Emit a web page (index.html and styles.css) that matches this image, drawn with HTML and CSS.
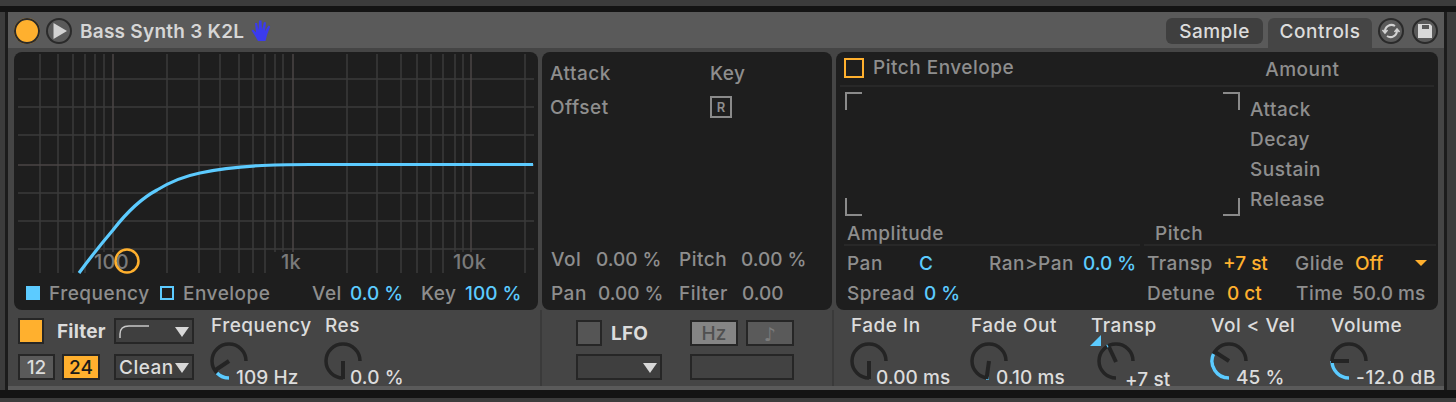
FILE: index.html
```html
<!DOCTYPE html>
<html lang="en">
<head>
<meta charset="UTF-8">
<title>Bass Synth 3 K2L</title>
<link rel="stylesheet" href="styles.css">
</head>
<body>

<div class="top-band"></div>
<div class="black-bar"></div>

<div class="device">

    <!-- Title bar -->
    <header class="titlebar">
        <div class="round-btn power"></div>
        <div class="round-btn play">
            <svg width="26" height="26" viewBox="0 0 26 26"><path d="M7.500 5 L21 13 L7.500 21 Z" fill="#d2d2d2"/></svg>
        </div>
        <div class="title">Bass Synth 3 K2L</div>
        <svg class="hand" width="20" height="22" viewBox="0 0 20 22">
            <path d="M7 21 L3.5 15 L0.5 10.5 L2 9.5 L5 12.5 L4 3 L6 3 L7.5 10 L8 0.5 L10.5 0.5 L11 10 L13 2 L15 2.5 L14 11 L17.5 5.5 L19.2 6.5 L16 15 L14.5 21 Z" fill="#3b3bee"/>
        </svg>
        <div class="tabs">
            <div class="tab">Sample</div>
            <div class="tab active">Controls</div>
        </div>
        <div class="round-btn sync">
            <svg width="26" height="26" viewBox="0 0 26 26" fill="none" stroke="#d2d2d2" stroke-width="2">
                <path d="M7 14 A6.500 6.500 0 0 1 17 8"/>
                <path d="M19 12 A6.500 6.500 0 0 1 9 18"/>
                <path d="M4.500 12 L7 15 L9.500 12" stroke-width="1.6"/>
                <path d="M16.500 14 L19 11 L21.500 14" stroke-width="1.6"/>
            </svg>
        </div>
        <div class="round-btn save">
            <svg width="26" height="26" viewBox="0 0 26 26"><path fill-rule="evenodd" d="M6 6 H18 L20 8 V20 H6 Z M10 7 V11 H17 V7 Z" fill="#d8d8d8"/></svg>
        </div>
    </header>

    <!-- Display panels -->
    <div class="columns panels">

        <section class="panel panel-filter">
            <svg class="graph" width="524" height="224" viewBox="14 52 524 224" fill="none">
                <g class="grid-line">
                    <path d="M18 79 H534 M18 107 H534 M18 135 H534 M18 193 H534 M18 221 H534 M18 249 H534"/>
                    <path d="M40 54 V273 M58 54 V273 M73 54 V273 M85 54 V273 M95 54 V252 M104 54 V252"/>
                    <path d="M167 54 V273 M199 54 V273 M220 54 V273 M239 54 V273 M253 54 V273 M265 54 V273 M275 54 V252 M283 54 V252"/>
                    <path d="M347 54 V273 M377 54 V273 M401 54 V273 M417 54 V273 M431 54 V273 M443 54 V273 M455 54 V252 M463 54 V252 M525 54 V273"/>
                </g>
                <path class="grid-bright" d="M18 165 H534 M113 54 V252 M293 54 V252 M471 54 V252"/>
                <text class="axis" x="94" y="269">100</text>
                <text class="axis" x="281" y="269">1k</text>
                <text class="axis" x="453" y="269">10k</text>
                <path class="curve" d="M79 273 C90 258 102 243 113 230 C127 212 142 198 157 190 C170 182 185 176 200 173 C218 169 240 166.500 262 165.500 C280 164.800 295 164.500 310 164.500 H533"/>
                <circle class="cutoff" cx="127" cy="261" r="11.500"/>
            </svg>
            <div class="row legend">
                <span class="swatch full"></span>
                <span>Frequency</span>
                <span class="swatch"></span>
                <span>Envelope</span>
                <span>Vel</span>
                <span class="blue">0.0 %</span>
                <span>Key</span>
                <span class="blue">100 %</span>
            </div>
        </section>

        <section class="panel panel-offset">
            <div class="row row-offset"><span>Attack</span><span>Key</span></div>
            <div class="row row-offset"><span>Offset</span><span class="r-box">R</span></div>
            <div class="row row-vol tail"><span>Vol</span><span class="num">0.00 %</span><span>Pitch</span><span class="num">0.00 %</span></div>
            <div class="row row-pan"><span>Pan</span><span class="num">0.00 %</span><span>Filter</span><span class="num">0.00</span></div>
        </section>

        <section class="panel panel-env">
            <div class="env-head">
                <span class="check"></span>
                <span class="env-name">Pitch Envelope</span>
                <span class="env-amount">Amount</span>
            </div>
            <div class="env-body">
                <div class="env-box">
                    <i class="corner tl"></i><i class="corner tr"></i>
                    <i class="corner bl"></i><i class="corner br"></i>
                </div>
                <div class="adsr">
                    <div>Attack</div>
                    <div>Decay</div>
                    <div>Sustain</div>
                    <div>Release</div>
                </div>
            </div>
            <div class="sections">
                <div class="section-name">Amplitude</div>
                <div class="section-name second">Pitch</div>
            </div>
            <div class="row row-a">
                <span>Pan</span><span class="blue">C</span><span>Ran&gt;Pan</span><span class="blue">0.0 %</span>
                <span>Transp</span><span class="orange">+7 st</span><span>Glide</span><span class="orange">Off</span><i class="tri small"></i>
            </div>
            <div class="row row-b">
                <span>Spread</span><span class="blue">0 %</span>
                <span>Detune</span><span class="orange">0 ct</span><span>Time</span><span class="num">50.0 ms</span>
            </div>
        </section>
    </div>

    <!-- Bottom controls -->
    <div class="columns controls">

        <div class="ctl ctl-filter">
            <div class="filter-group">
                <div class="filter-row">
                    <span class="toggle on"></span>
                    <span class="strong filter-name">Filter</span>
                    <div class="drop">
                        <svg width="32" height="16" viewBox="0 0 32 16" fill="none"><path d="M1 14 V10 Q1 2 10 2 H30" stroke="#c8c8c8" stroke-width="1.500"/></svg>
                        <i class="tri"></i>
                    </div>
                </div>
                <div class="filter-row">
                    <span class="btn slope">12</span>
                    <span class="btn slope on">24</span>
                    <div class="drop clean">Clean<i class="tri"></i></div>
                </div>
            </div>
            <div class="knob knob-freq">
                <div class="knob-name">Frequency</div>
                <div class="knob-row">
                    <svg class="dial" width="38" height="38" viewBox="0 0 38 38" fill="none">
                        <path class="dial-track" d="M19 36 A17 17 0 1 1 36 19"/>
                        <path class="dial-value" d="M7 31 A17 17 0 0 0 19 36"/>
                        <path class="dial-needle" d="M19 19 L4 29"/>
                    </svg>
                    <span class="knob-value">109 Hz</span>
                </div>
            </div>
            <div class="knob">
                <div class="knob-name">Res</div>
                <div class="knob-row">
                    <svg class="dial" width="38" height="38" viewBox="0 0 38 38" fill="none">
                        <path class="dial-track" d="M19 36 A17 17 0 1 1 36 19"/>
                        <path class="dial-needle" d="M19 19 V37"/>
                    </svg>
                    <span class="knob-value">0.0 %</span>
                </div>
            </div>
        </div>

        <div class="ctl ctl-lfo">
            <div class="lfo-col">
                <div class="lfo-top">
                    <span class="toggle"></span>
                    <span class="strong">LFO</span>
                </div>
                <div class="drop lfo-drop"><i class="tri"></i></div>
            </div>
            <div class="lfo-col">
                <div class="lfo-top tight">
                    <span class="btn rate on-grey">Hz</span>
                    <span class="btn rate note">♪</span>
                </div>
                <div class="drop rate-box"></div>
            </div>
        </div>

        <div class="ctl ctl-knobs">
            <div class="knob">
                <div class="knob-name">Fade In</div>
                <div class="knob-row">
                    <svg class="dial" width="38" height="38" viewBox="0 0 38 38" fill="none">
                        <path class="dial-track" d="M19 36 A17 17 0 1 1 36 19"/>
                        <path class="dial-needle" d="M19 19 V37"/>
                    </svg>
                    <span class="knob-value">0.00 ms</span>
                </div>
            </div>
            <div class="knob">
                <div class="knob-name">Fade Out</div>
                <div class="knob-row">
                    <svg class="dial" width="38" height="38" viewBox="0 0 38 38" fill="none">
                        <path class="dial-track" d="M19 36 A17 17 0 1 1 36 19"/>
                        <path class="dial-value" d="M16 36 L19 36"/>
                        <path class="dial-needle" d="M19 19 L16.500 37"/>
                    </svg>
                    <span class="knob-value">0.10 ms</span>
                </div>
            </div>
            <div class="knob knob-transp">
                <div class="knob-name">Transp</div>
                <i class="center-mark"></i>
                <div class="knob-row">
                    <svg class="dial" width="38" height="38" viewBox="0 0 38 38" fill="none">
                        <path class="dial-track" d="M19 36 A17 17 0 1 1 36 19"/>
                        <path class="dial-value" d="M10 4.500 L11 4"/>
                        <path class="dial-needle" d="M19 20 L12 5"/>
                    </svg>
                    <span class="knob-value">+7 st</span>
                </div>
            </div>
            <div class="knob">
                <div class="knob-name">Vol &lt; Vel</div>
                <div class="knob-row">
                    <svg class="dial" width="38" height="38" viewBox="0 0 38 38" fill="none">
                        <path class="dial-track" d="M19 36 A17 17 0 1 1 36 19"/>
                        <path class="dial-value" d="M3.500 12 A17 17 0 0 0 19 36"/>
                        <path class="dial-needle" d="M19 19 L5 10"/>
                    </svg>
                    <span class="knob-value">45 %</span>
                </div>
            </div>
            <div class="knob">
                <div class="knob-name">Volume</div>
                <div class="knob-row">
                    <svg class="dial" width="38" height="38" viewBox="0 0 38 38" fill="none">
                        <path class="dial-track" d="M19 36 A17 17 0 1 1 36 19"/>
                        <path class="dial-value" d="M2 19 A17 17 0 0 0 19 36"/>
                        <path class="dial-needle" d="M19 19 H1"/>
                    </svg>
                    <span class="knob-value wide">-12.0 dB</span>
                </div>
            </div>
        </div>
    </div>

    <div class="foot"></div>
</div>

<div class="black-bar bottom"></div>

</body>
</html>
```

FILE: styles.css
```css
* {
    box-sizing: border-box;
}
body {
    margin: 0;
    height: 402px;
    overflow: hidden;
    background: #3c3c3c;
    color: #8e8e8e;
    font-family: Inter, "Noto Sans", sans-serif;
    font-size: 19px;
    font-weight: 500;
    letter-spacing: 0.5px;
    line-height: 20px;
}
i {
    display: block;
}
.top-band {
    height: 6px;
}
.black-bar {
    height: 6px;
    background: #141414;
}
.black-bar.bottom {
    height: 8px;
}
.device {
    margin: 0 9px 0 5px;
    border-left: 3px solid #1c1c1c;
    border-right: 3px solid #1c1c1c;
    background: #454545;
}

/* title bar */
.titlebar {
    height: 36px;
    padding: 6px 6px 0 6px;
    display: flex;
    align-items: flex-start;
    background: #5a5a5a;
}
.round-btn {
    width: 26px;
    height: 26px;
    border-radius: 50%;
    flex: none;
    box-shadow: inset 0 0 0 2px #2a2a2a;
}
.power {
    background: #ffb02e;
}
.play {
    margin-left: 6px;
}
.title {
    margin-left: 8px;
    color: #d6d6d6;
    font-weight: 600;
    letter-spacing: 0.25px;
    line-height: 28px;
}
.hand {
    margin: 2px 0 0 7px;
}
.tabs {
    margin-left: auto;
    display: flex;
    gap: 5px;
}
.tab {
    width: 97px;
    height: 26px;
    line-height: 28px;
    text-align: center;
    color: #dcdcdc;
    background: #3f3f3f;
    border-radius: 6px;
}
.tab.active {
    width: 104px;
    height: 30px;
    border-radius: 6px 6px 0 0;
    background: #454545;
}
.sync {
    margin-left: 6px;
}
.save {
    margin-left: 8px;
}

/* shared columns */
.columns {
    display: grid;
    grid-template-columns: 524px 290px 602px;
    column-gap: 4px;
    padding: 0 6px;
}
.panels {
    padding-top: 4px;
}
.panel {
    height: 258px;
    background: #1e1e1e;
    border-radius: 8px;
    display: flex;
    flex-direction: column;
}
.row {
    display: grid;
    height: 34px;
    line-height: 35px;
    white-space: nowrap;
}
.num {
    letter-spacing: 0;
}
.blue {
    color: #5ccbff;
    letter-spacing: 0;
}
.orange {
    color: #ffb02e;
    letter-spacing: 0;
}

/* filter graph */
.graph {
    display: block;
}
.grid-line {
    stroke: #3b3b3b;
    stroke-width: 1.5;
}
.grid-bright {
    stroke: #4b4646;
    stroke-width: 1.5;
}
.axis {
    fill: #7a7a7a;
    stroke: none;
    font-size: 20px;
    letter-spacing: 0.3px;
}
.curve {
    stroke: #5ccbff;
    stroke-width: 3.2;
}
.cutoff {
    stroke: #ffb02e;
    stroke-width: 2.5;
}
.legend {
    padding-left: 12px;
    grid-template-columns: 23px 111px 23px 129px 38px 71px 44px 1fr;
}
.swatch {
    width: 14px;
    height: 14px;
    margin-top: 10px;
    border: 2px solid #5ccbff;
}
.swatch.full {
    background: #5ccbff;
}

/* offset panel */
.panel-offset {
    padding: 4px 0 0 8px;
}
.row-offset {
    grid-template-columns: 160px 1fr;
}
.r-box {
    width: 22px;
    height: 22px;
    margin: 6px 0 0 0;
    border: 2px solid #8a8a8a;
    font-size: 13px;
    font-weight: 600;
    line-height: 18px;
    letter-spacing: 0;
    text-align: center;
}
.tail {
    margin-top: auto;
}
.row-vol {
    padding-left: 1px;
    grid-template-columns: 45px 83px 62px 1fr;
}
.row-pan {
    padding-left: 1px;
    grid-template-columns: 47px 81px 63px 1fr;
}

/* pitch envelope panel */
.panel-env {
    padding: 6px 4px 0 8px;
}
.env-head {
    display: flex;
    height: 29px;
    border-bottom: 2px solid #282828;
    margin-left: -4px;
    padding-left: 4px;
}
.check {
    width: 20px;
    height: 20px;
    border: 2px solid #ffb02e;
}
.env-name {
    margin-left: 9px;
}
.env-amount {
    margin-left: 251px;
    line-height: 24px;
}
.env-body {
    display: flex;
    height: 124px;
    margin: 5px 0 0 1px;
}
.env-box {
    width: 395px;
    display: flex;
    flex-wrap: wrap;
    justify-content: space-between;
    align-content: space-between;
}
.corner {
    width: 17px;
    height: 18px;
    border: 0 solid #8a8a8a;
}
.corner.tl {
    border-width: 2px 0 0 2px;
    margin-right: 361px;
}
.corner.tr {
    border-width: 2px 2px 0 0;
}
.corner.bl {
    border-width: 0 0 2px 2px;
    margin-right: 361px;
}
.corner.br {
    border-width: 0 2px 2px 0;
}
.adsr {
    margin-left: 10px;
    padding-top: 3px;
    line-height: 30px;
}
.sections {
    display: grid;
    grid-template-columns: 296px 292px;
    column-gap: 4px;
    margin-top: 8px;
}
.section-name {
    height: 22px;
    padding-left: 3px;
    border-bottom: 2px solid #282828;
}
.section-name.second {
    padding-left: 11px;
}
.row-a,
.row-b {
    height: 30px;
    line-height: 31px;
    padding-left: 3px;
}
.row-a {
    margin-top: 2px;
    grid-template-columns: 72px 70px 94px 64px 76px 72px 60px 60px 1fr;
}
.row-b {
    grid-template-columns: 77px 223px 80px 69px 56px 1fr;
}

/* triangles */
.tri {
    width: 0;
    height: 0;
    border-left: 7px solid transparent;
    border-right: 7px solid transparent;
    border-top: 10px solid #d8d8d8;
}
.tri.small {
    border-left-width: 6px;
    border-right-width: 6px;
    border-top: 6px solid #ffb02e;
    margin-top: 12px;
}

/* bottom controls */
.controls {
    height: 76px;
}
.ctl {
    display: flex;
}
.ctl-filter {
    padding-left: 4px;
}
.filter-group {
    width: 176px;
    padding-top: 8px;
    display: flex;
    flex-direction: column;
    gap: 10px;
}
.filter-row {
    display: flex;
    align-items: center;
    height: 26px;
}
.toggle {
    width: 26px;
    height: 26px;
    border: 2px solid #262626;
    background: #555;
    flex: none;
}
.toggle.on {
    background: #ffb02e;
}
.strong {
    color: #dcdcdc;
    font-weight: 700;
    letter-spacing: 0.2px;
    padding-top: 2px;
}
.filter-name {
    margin-left: 13px;
}
.drop {
    margin-left: auto;
    width: 80px;
    height: 26px;
    border: 2px solid #262626;
    background: #3f3f3f;
    display: flex;
    align-items: center;
    justify-content: space-between;
    padding: 1px 3px 0 3px;
    color: #dcdcdc;
    white-space: nowrap;
}
.btn {
    height: 26px;
    border: 2px solid #262626;
    background: #5a5a5a;
    color: #dcdcdc;
    text-align: center;
    line-height: 24px;
    letter-spacing: 0;
}
.slope {
    width: 37px;
}
.slope.on {
    width: 38px;
    margin-left: 7px;
    background: #ffb02e;
    color: #1a1a1a;
}
.knob {
    padding-top: 6px;
    color: #dcdcdc;
    white-space: nowrap;
    position: relative;
}
.knob-name {
    margin-left: 1px;
    height: 26px;
    letter-spacing: 0.5px;
}
.knob-freq {
    width: 114px;
    margin-left: 16px;
}
.knob-row {
    display: flex;
    align-items: flex-end;
}
.dial {
    flex: none;
}
.dial-track {
    stroke: #242424;
    stroke-width: 3.5;
}
.dial-value {
    stroke: #5ccbff;
    stroke-width: 3.5;
}
.dial-needle {
    stroke: #242424;
    stroke-width: 4;
}
.knob-value {
    margin: 0 0 -8px -12px;
    letter-spacing: 0.1px;
}
.knob-value.wide {
    letter-spacing: 0.6px;
}

/* lfo */
.ctl-lfo {
    margin: 0 -2px;
    padding: 10px 0 0 34px;
    gap: 28px;
    border-left: 2px solid #3a3a3a;
    border-right: 2px solid #3a3a3a;
}
.lfo-col {
    display: flex;
    flex-direction: column;
    gap: 8px;
}
.lfo-top {
    display: flex;
    align-items: center;
    gap: 9px;
    height: 26px;
}
.lfo-top.tight {
    gap: 8px;
}
.lfo-drop {
    width: 86px;
    justify-content: flex-end;
}
.rate {
    width: 48px;
}
.on-grey {
    background: #858585;
    color: #505050;
}
.note {
    color: #7c7c7c;
    font-family: "DejaVu Sans", sans-serif;
}
.rate-box {
    width: 104px;
    background: #424242;
}

/* right hand knobs */
.ctl-knobs {
    padding-left: 14px;
    display: grid;
    grid-template-columns: repeat(5, 120px);
}
.knob-transp .knob-row {
    margin-left: 7px;
}
.knob-transp .knob-value {
    margin-left: -10px;
    margin-bottom: -10px;
}
.center-mark {
    position: absolute;
    left: 0;
    top: 25px;
    width: 0;
    height: 0;
    border-left: 11px solid transparent;
    border-bottom: 11px solid #5ccbff;
}
.foot {
    height: 4px;
    background: #5a5a5a;
}
```
